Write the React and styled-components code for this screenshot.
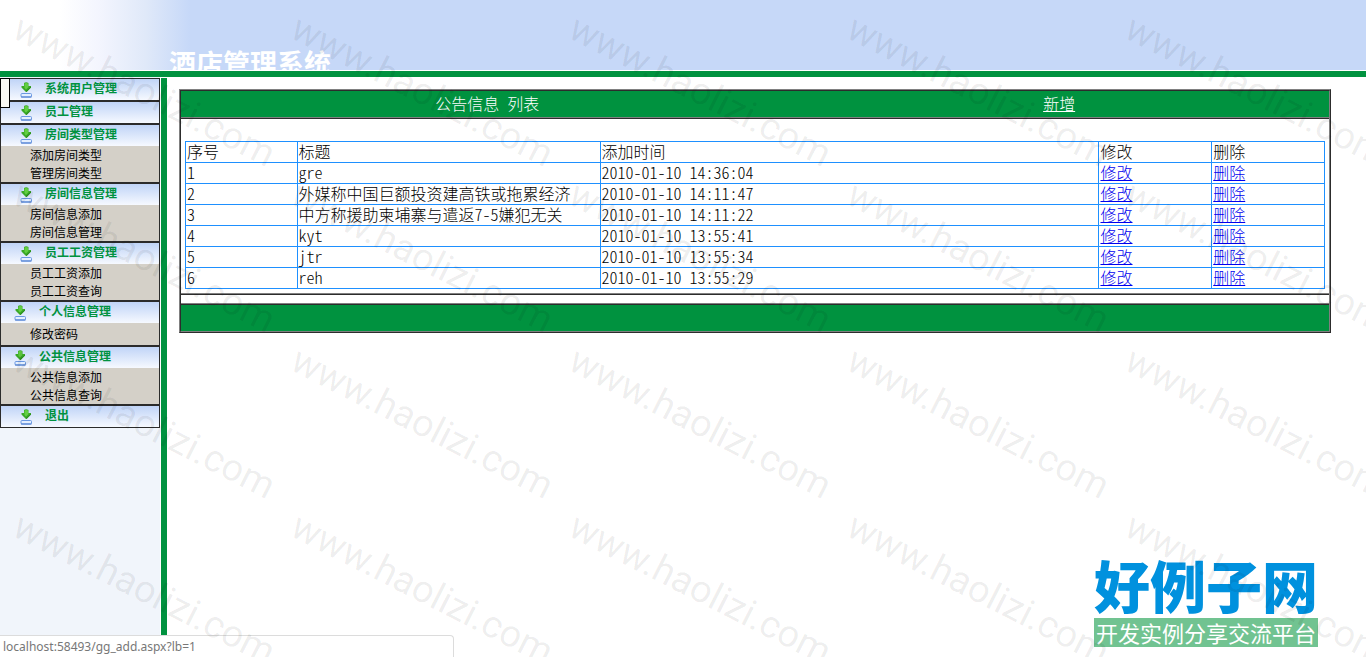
import React from "react";
import styled, { createGlobalStyle } from "styled-components";

const GlobalStyle = createGlobalStyle`
  * {
    box-sizing: border-box;
  }

  body {
    margin: 0;
    background-color: white;
    font-family: "Noto Sans CJK SC", sans-serif;
    font-size: 16px;
    color: black;
  }
`;

const Page = styled.div`
  position: relative;
  display: flex;
  flex-direction: column;
  min-height: 100vh;
  overflow: hidden;
`;

const Header = styled.header`
  height: 70px;
  padding: 45px 0 0 169px;
  overflow: hidden;
  background: linear-gradient(to right, white 60px, #f3f5fe 100px, #e0e9f9 145px, #c6d8f8 190px);
`;

const SiteTitle = styled.h1`
  margin: 0;
  color: white;
  font-size: 27px;
  line-height: 36px;
  font-weight: 700;
`;

const HeaderLine = styled.div`
  height: 7px;
  border-top: 1px solid white;
  background-color: #00923f;
`;

const Body = styled.div`
  display: flex;
  flex: 1;
`;

const Sidebar = styled.aside`
  position: relative;
  width: 160px;
  flex-shrink: 0;
  padding-top: 1px;
  background-color: #f1f5fb;
`;

const SidebarHandle = styled.div`
  position: absolute;
  top: 1px;
  left: 0;
  width: 10px;
  height: 30px;
  border: 1px solid black;
  background-color: #f8f8f4;
`;

const Divider = styled.div`
  width: 7px;
  flex-shrink: 0;
  margin-top: 1px;
  border-left: 1px solid white;
  background-color: #00923f;
`;

const Group = styled.section`
  border: 1px solid #2b2b2b;
`;

const GroupTitle = styled.h2`
  display: flex;
  align-items: center;
  gap: 13px;
  height: 21px;
  margin: 0;
  padding-left: ${({ $indent }) => $indent}px;
  background: linear-gradient(#c0d4f7, #f6f9ff);
  color: #00923f;
  font-size: 12px;
  line-height: 18px;
  font-weight: 700;

  span {
    padding-bottom: 4px;
  }
`;

const SubMenu = styled.ul`
  display: flex;
  flex-direction: column;
  justify-content: center;
  min-height: 22px;
  margin: 0;
  padding: 0 0 0 29px;
  list-style: none;
  background-color: #d4d0c8;

  a {
    display: block;
    color: black;
    font-size: 12px;
    line-height: 18px;
    text-decoration: none;
  }
`;

const Main = styled.main`
  flex: 1;
  padding: 12px 35px 0 12px;
`;

const Panel = styled.div`
  border: 2px ridge gray;
`;

const PanelHeader = styled.div`
  display: grid;
  grid-template-columns: 8fr 7fr;
  height: 26px;
  align-items: start;
  text-align: center;
  line-height: 24px;
  background-color: #00923f;
  color: white;
  font-weight: 300;
  font-feature-settings: "hwid";

  a {
    color: white;
  }
`;

const PanelTitle = styled.div``;

const PanelAction = styled.div`
  padding-right: 4px;
`;

const PanelContent = styled.div`
  padding: 22px 4px 4px;
  border-top: 2px ridge gray;
`;

const PanelGap = styled.div`
  height: 10px;
  border-top: 2px ridge gray;
`;

const PanelFooter = styled.div`
  height: 28px;
  border-top: 2px ridge gray;
  background-color: #00923f;
`;

const Table = styled.table`
  width: 100%;
  table-layout: fixed;
  border-collapse: collapse;
  font-feature-settings: "hwid";

  th,
  td {
    height: 21px;
    padding: 0 1px 2px;
    border: 1px solid #1e90ff;
    font-weight: 300;
    line-height: 18px;
    text-align: left;
  }

  a {
    color: #0000ee;
  }
`;

const Col = styled.col`
  width: ${({ $width }) => $width};
`;

const StatusBar = styled.div`
  position: absolute;
  left: 0;
  bottom: 0;
  width: 454px;
  height: 22px;
  padding-left: 3px;
  border: 1px solid #dcdcdc;
  border-width: 1px 1px 0 0;
  border-radius: 0 4px 0 0;
  background-color: white;
  color: #777;
  font-family: "Noto Sans", sans-serif;
  font-size: 12px;
  line-height: 21px;
`;

const Brand = styled.div`
  position: absolute;
  right: 48px;
  bottom: 10px;
  display: flex;
  flex-direction: column;
  text-align: center;
`;

const BrandName = styled.div`
  padding-bottom: 4px;
  color: #0091de;
  font-size: 56px;
  line-height: 60px;
  font-weight: 900;
`;

const BrandTagline = styled.div`
  background-color: #71c391;
  color: white;
  font-size: 22px;
  line-height: 29px;
`;

const Watermark = styled.div`
  position: absolute;
  inset: 0;
  display: grid;
  grid-template-columns: repeat(5, 278px);
  grid-auto-rows: 166px;
  padding: 3px 0 0 7px;
  overflow: hidden;
  pointer-events: none;
  color: rgba(0, 0, 0, 0.07);
  font-family: Roboto, sans-serif;
  font-size: 38px;
  line-height: 40px;

  span {
    transform: rotate(27deg);
    transform-origin: 0 40px;
  }
`;

const menu = [
  { title: "系统用户管理", indent: 19, items: [] },
  { title: "员工管理", indent: 19, items: [] },
  { title: "房间类型管理", indent: 19, items: ["添加房间类型", "管理房间类型"] },
  { title: "房间信息管理", indent: 19, items: ["房间信息添加", "房间信息管理"] },
  { title: "员工工资管理", indent: 19, items: ["员工工资添加", "员工工资查询"] },
  { title: "个人信息管理", indent: 13, items: ["修改密码"] },
  { title: "公共信息管理", indent: 13, items: ["公共信息添加", "公共信息查询"] },
  { title: "退出", indent: 19, items: [] },
];

const notices = [
  { id: 1, title: "gre", time: "2010-01-10 14:36:04" },
  { id: 2, title: "外媒称中国巨额投资建高铁或拖累经济", time: "2010-01-10 14:11:47" },
  { id: 3, title: "中方称援助柬埔寨与遣返7-5嫌犯无关", time: "2010-01-10 14:11:22" },
  { id: 4, title: "kyt", time: "2010-01-10 13:55:41" },
  { id: 5, title: "jtr", time: "2010-01-10 13:55:34" },
  { id: 6, title: "reh", time: "2010-01-10 13:55:29" },
];

const DownloadIcon = () => (
  <svg width="12" height="16" viewBox="0 0 12 16" aria-hidden="true">
    <path d="M4 1Q6 -0.5 8.5 1V4H11V5.5L6.5 10H6L1.5 5.5V4H4Z" fill="#3aa826" />
    <path d="M4.5 1.5Q6 0.5 8 1.5V4.5H9L6 7.5L4.5 6Z" fill="#62cf42" />
    <path d="M6.5 10L11 5.5V4.5L6 9Z" fill="#2b8d1c" />
    <rect x="1" y="11.5" width="10.5" height="3.5" rx="1" fill="#e4efff" stroke="#6a98e2" />
    <path d="M1 15H11.5" stroke="#4d7dcf" />
  </svg>
);

const MenuGroup = ({ title, indent, items }) => (
  <Group>
    <GroupTitle $indent={indent}>
      <DownloadIcon />
      <span>{title}</span>
    </GroupTitle>
    {items.length > 0 && (
      <SubMenu>
        {items.map((item) => (
          <li key={item}>
            <a href={`#${item}`}>{item}</a>
          </li>
        ))}
      </SubMenu>
    )}
  </Group>
);

const NoticeTable = () => (
  <Table>
    <colgroup>
      <Col $width="9.8%" />
      <Col $width="26.6%" />
      <Col $width="43.8%" />
      <Col $width="9.9%" />
      <Col $width="9.9%" />
    </colgroup>
    <thead>
      <tr>
        <th>序号</th>
        <th>标题</th>
        <th>添加时间</th>
        <th>修改</th>
        <th>删除</th>
      </tr>
    </thead>
    <tbody>
      {notices.map(({ id, title, time }) => (
        <tr key={id}>
          <td>{id}</td>
          <td>{title}</td>
          <td>{time}</td>
          <td><a href={`#edit-${id}`}>修改</a></td>
          <td><a href={`#delete-${id}`}>删除</a></td>
        </tr>
      ))}
    </tbody>
  </Table>
);

const App = () => (
  <Page>
    <GlobalStyle />
    <Header>
      <SiteTitle>酒店管理系统</SiteTitle>
    </Header>
    <HeaderLine />
    <Body>
      <Sidebar>
        {menu.map((group) => (
          <MenuGroup key={group.title} {...group} />
        ))}
        <SidebarHandle />
      </Sidebar>
      <Divider />
      <Main>
        <Panel>
          <PanelHeader>
            <PanelTitle>公告信息 列表</PanelTitle>
            <PanelAction><a href="#add">新增</a></PanelAction>
          </PanelHeader>
          <PanelContent>
            <NoticeTable />
          </PanelContent>
          <PanelGap />
          <PanelFooter />
        </Panel>
      </Main>
    </Body>
    <StatusBar>localhost:58493/gg_add.aspx?lb=1</StatusBar>
    <Brand>
      <BrandName>好例子网</BrandName>
      <BrandTagline>开发实例分享交流平台</BrandTagline>
    </Brand>
    <Watermark aria-hidden="true">
      {Array.from({ length: 20 }, (_, i) => (
        <span key={i}>www.haolizi.com</span>
      ))}
    </Watermark>
  </Page>
);

export default App;
